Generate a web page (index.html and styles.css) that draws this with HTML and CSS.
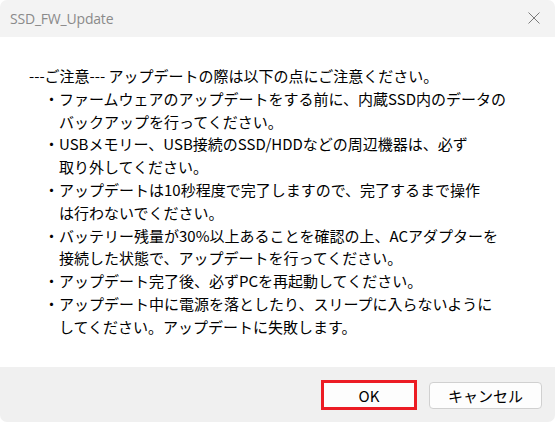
FILE: index.html
```html
<!DOCTYPE html>
<html lang="ja">
<head>
<meta charset="utf-8">
<link rel="stylesheet" href="styles.css">
</head>
<body>
<div class="window">
  <div class="titlebar">
    <span class="title">SSD_FW_Update</span>
    <svg class="close" width="12" height="12" viewBox="0 0 12 12"><path d="M0.5 0.5 L11.5 11.5 M11.5 0.5 L0.5 11.5" stroke="#7a7a7a" stroke-width="1" fill="none"/></svg>
  </div>
  <div class="content">
    <p class="line">---ご注意--- アップデートの際は以下の点にご注意ください。</p>
    <div class="item"><span class="dot">・</span><div class="text">ファームウェアのアップデートをする前に、内蔵SSD内のデータの<br>バックアップを行ってください。</div></div>
    <div class="item"><span class="dot">・</span><div class="text">USBメモリー、USB接続のSSD/HDDなどの周辺機器は、必ず<br>取り外してください。</div></div>
    <div class="item"><span class="dot">・</span><div class="text">アップデートは10秒程度で完了しますので、完了するまで操作<br>は行わないでください。</div></div>
    <div class="item"><span class="dot">・</span><div class="text">バッテリー残量が30%以上あることを確認の上、ACアダプターを<br>接続した状態で、アップデートを行ってください。</div></div>
    <div class="item"><span class="dot">・</span><div class="text">アップデート完了後、必ずPCを再起動してください。</div></div>
    <div class="item"><span class="dot">・</span><div class="text">アップデート中に電源を落としたり、スリープに入らないように<br>してください。アップデートに失敗します。</div></div>
  </div>
  <div class="footer">
    <button class="btn btn-ok">OK</button>
    <button class="btn btn-cancel">キャンセル</button>
  </div>
</div>
</body>
</html>
```
FILE: styles.css
```css
html, body {
  margin: 0;
  padding: 0;
  background: #ffffff;
}
.window {
  width: 555px;
  height: 422px;
  display: flex;
  flex-direction: column;
  border-radius: 7px;
  overflow: hidden;
  font-family: "Noto Sans CJK JP", "Noto Sans", sans-serif;
  color: #000;
}
.titlebar {
  height: 37px;
  flex: none;
  background: #f3f3f3;
  display: flex;
  align-items: center;
  justify-content: space-between;
  padding: 0 15px 0 10px;
  box-sizing: border-box;
}
.title {
  font-family: "Open Sans", "Noto Sans", sans-serif;
  font-size: 14px;
  color: #8a8a8a;
  letter-spacing: -0.2px;
  margin-top: -1px;
}
.close {
  display: block;
  margin-top: -1px;
}
.content {
  flex: 1;
  background: #ffffff;
  padding: 28px 0 0 29px;
  font-size: 15px;
  line-height: 22.8px;
  white-space: nowrap;
}
.line {
  margin: 0;
}
.item {
  display: flex;
  padding-left: 15px;
}
.dot {
  width: 15px;
  flex: none;
}
.footer {
  height: 55px;
  flex: none;
  background: #f0f0f0;
  display: flex;
  align-items: center;
  justify-content: flex-end;
  padding: 1px 13px 0 0;
  box-sizing: border-box;
  gap: 12px;
}
.btn {
  font-family: "Noto Sans CJK JP", "Noto Sans", sans-serif;
  font-size: 15px;
  color: #000;
  background: #fdfdfd;
  padding: 0;
  box-sizing: border-box;
  line-height: 1;
}
.btn-ok {
  width: 96px;
  height: 30px;
  border: 3px solid #ec1c24;
  border-radius: 0;
}
.btn-cancel {
  width: 113px;
  height: 27px;
  border: 1px solid #d0d0d0;
  border-radius: 4px;
}
```
